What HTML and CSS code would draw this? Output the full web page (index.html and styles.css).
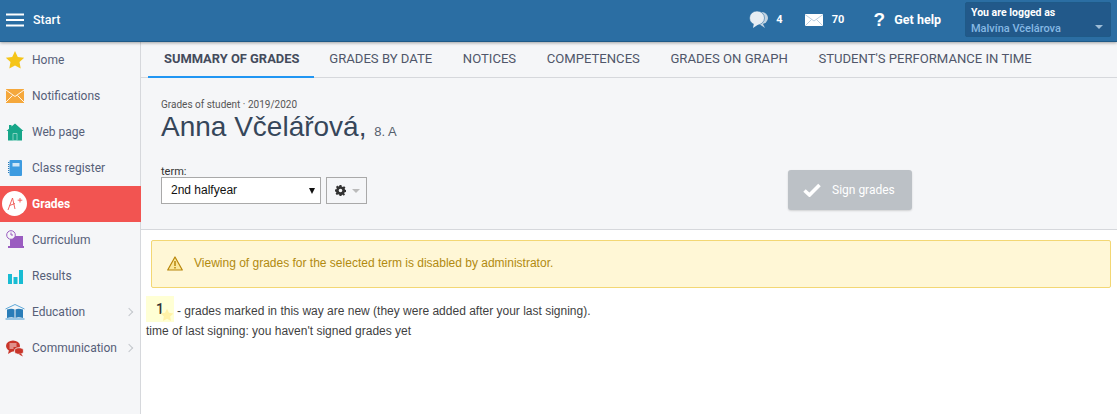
FILE: index.html
```html
<!DOCTYPE html>
<html lang="en">
<head>
<meta charset="utf-8">
<title>Summary of grades</title>
<link rel="stylesheet" href="styles.css">
</head>
<body>
<header class="topbar">
  <div class="brand">
    <svg class="burger" width="18" height="14" viewBox="0 0 18 14"><path d="M0 1.500h18M0 7h18M0 12.500h18" stroke="#fff" stroke-width="2"/></svg>
    <span class="brand-text">Start</span>
  </div>
  <div class="top-actions">
    <a class="top-item t-chat">
      <svg width="20" height="20" viewBox="0 0 20 20"><ellipse cx="12.500" cy="8" rx="6.500" ry="6" fill="#c3d4e2"/><path d="M13 12l3 6-6-4z" fill="#c3d4e2"/><ellipse cx="8" cy="8" rx="7.500" ry="7" fill="#e6edf3" stroke="#2b6ea3" stroke-width=".6"/><path d="M5 13l-1 5 6-4z" fill="#e6edf3"/></svg>
      <b>4</b>
    </a>
    <a class="top-item t-mail">
      <svg width="18" height="12" viewBox="0 0 18 12"><rect width="18" height="12" fill="#fff"/><path d="M0 .5l9 6.500 9-6.500M0 12l6.500-6.500M18 12l-6.500-6.500" fill="none" stroke="#a9c3d8" stroke-width=".8"/></svg>
      <b>70</b>
    </a>
    <a class="top-item t-help">
      <span class="qmark">?</span>
      <b class="help-text">Get help</b>
    </a>
    <div class="user-box">
      <div class="user-label">You are logged as</div>
      <div class="user-name">Malvína Včelárova</div>
      <span class="user-caret"></span>
    </div>
  </div>
</header>
<div class="shell">
  <nav class="sidebar">
    <a class="nav-item"><span class="nav-icon"><svg width="20" height="20" viewBox="0 0 20 20"><path d="M10 1l2.800 5.900 6.400.8-4.700 4.400 1.200 6.400-5.700-3.100-5.700 3.100 1.200-6.400L.8 7.700l6.400-.8z" fill="#f5c518"/></svg></span>Home</a>
    <a class="nav-item"><span class="nav-icon"><svg width="18" height="14" viewBox="0 0 18 14"><rect width="18" height="14" fill="#f5a83c"/><path d="M0 1l9 6.500 9-6.500M0 13l6.500-6.500M18 13l-6.500-6.500" fill="none" stroke="#fff" stroke-width=".9"/></svg></span>Notifications</a>
    <a class="nav-item"><span class="nav-icon"><svg width="18" height="18" viewBox="0 0 18 18"><path d="M9 .5l8.500 7.500H16v9.500H2V8H.5L3 5.800V2h2.500v1.600z" fill="#17a689"/><path d="M7 10.500h4v7H7z" fill="none" stroke="#9fdccf" stroke-width=".8"/></svg></span>Web page</a>
    <a class="nav-item"><span class="nav-icon"><svg width="14" height="16" viewBox="0 0 14 16"><rect x="1.500" width="12.500" height="16" rx="1" fill="#3d9be0"/><path d="M.5 2v12" stroke="#2a7ab8" stroke-width="1.400" stroke-dasharray="1 1"/><rect x="4.500" y="3" width="7" height="3.500" fill="#cfe6f7"/></svg></span>Class register</a>
    <a class="nav-item active"><span class="grade-badge"><svg width="20" height="18" viewBox="0 0 20 18"><path d="M3 15L7.500 3 10 14M4.500 10.500L10 8.500" fill="none" stroke="#ee5350" stroke-width=".9"/><path d="M15 3v4.500M12.700 5.200h4.600" stroke="#ee5350" stroke-width=".9"/></svg></span>Grades</a>
    <a class="nav-item"><span class="nav-icon"><svg width="20" height="20" viewBox="0 0 20 20"><rect x="5" y="6" width="13" height="10" fill="#9a5cc0"/><rect x="3" y="16" width="16" height="2" fill="#9a5cc0"/><circle cx="6" cy="5" r="4.300" fill="#f5f6f8" stroke="#9a5cc0" stroke-width="1"/><path d="M6 2.500V5h2" fill="none" stroke="#9a5cc0"/></svg></span>Curriculum</a>
    <a class="nav-item"><span class="nav-icon"><svg width="16" height="15" viewBox="0 0 16 15"><path d="M1 5h4v10H1zM6.500 8h4v7h-4zM12 1h4v14h-4z" fill="#18bcd3"/></svg></span>Results</a>
    <a class="nav-item"><span class="nav-icon"><svg width="20" height="17" viewBox="0 0 20 17"><path d="M.5 5L10 .5 19.500 5" fill="none" stroke="#5fa8d8" stroke-width="1"/><path d="M2 5.500c3-1 6-1 7.500 0V14C8 13 5 13 2 14zM18 5.500c-3-1-6-1-7.500 0V14c1.500-1 4.500-1 7.500 0z" fill="#2a7db8"/><path d="M.5 15h19" stroke="#5fa8d8" stroke-width="1.200"/></svg></span>Education<span class="chev"></span></a>
    <a class="nav-item"><span class="nav-icon"><svg width="18" height="17" viewBox="0 0 18 17"><ellipse cx="7" cy="6" rx="7" ry="5.500" fill="#c9352a"/><path d="M3 10l-1 4 5-3z" fill="#c9352a"/><ellipse cx="13" cy="11" rx="4.500" ry="3.300" fill="#c9352a" stroke="#f5f6f8" stroke-width=".8"/><path d="M15 13.500l2 3-4-2z" fill="#c9352a"/><path d="M3.500 4h7M3.500 6h7M3.500 8h4" stroke="#fff" stroke-width=".9"/></svg></span>Communication<span class="chev"></span></a>
  </nav>
  <main class="content">
    <div class="tabs">
      <a class="tab active">SUMMARY OF GRADES</a>
      <a class="tab">GRADES BY DATE</a>
      <a class="tab">NOTICES</a>
      <a class="tab">COMPETENCES</a>
      <a class="tab">GRADES ON GRAPH</a>
      <a class="tab">STUDENT'S PERFORMANCE IN TIME</a>
    </div>
    <section class="page-head">
      <div class="crumb">Grades of student · 2019/2020</div>
      <h1 class="student">Anna Včelářová, <small class="class-name">8. A</small></h1>
      <div class="controls">
        <div class="term">
          <label class="term-label">term:</label>
          <div class="term-row">
            <div class="select">2nd halfyear<span class="select-caret"></span></div>
            <div class="cog-btn">
              <svg width="11" height="11" viewBox="0 0 24 24"><path fill="#333" fill-rule="evenodd" d="M10 0h4l.7 3.300 2.300 1 2.900-1.800 2.800 2.800L21 8.100l1 2.300 2 .6v4l-3 .7-1 2.300 1.800 2.900-2.800 2.800L17 21l-2.300 1-.7 2h-4l-.7-3-2.300-1-2.900 1.800-2.800-2.800L3 17l-1-2.300-2-.7v-4l3-.7 1-2.300-1.800-2.900 2.800-2.800L7 3l2.300-1zM12 8a4 4 0 1 0 0 8 4 4 0 0 0 0-8z"/></svg>
              <span class="cog-caret"></span>
            </div>
          </div>
        </div>
        <button class="sign-btn" type="button">
          <svg width="18" height="14" viewBox="0 0 18 14"><path d="M1.500 7.500L6.500 12 16.500 2" fill="none" stroke="#fff" stroke-width="3.600"/></svg>
          <span>Sign grades</span>
        </button>
      </div>
    </section>
    <section class="body">
      <div class="alert">
        <svg width="16" height="15" viewBox="0 0 16 15"><path d="M8 1l7.300 13H.7z" fill="#fbe89a" stroke="#b8860b" stroke-width="1.200" stroke-linejoin="round"/><path d="M8 5v5M8 11v1.600" stroke="#b8860b" stroke-width="1.500"/></svg>
        <span>Viewing of grades for the selected term is disabled by administrator.</span>
      </div>
      <p class="legend"><span class="new-grade">1<svg class="mini-star" width="14" height="14" viewBox="0 0 20 20"><path d="M10 1l2.800 5.900 6.400.8-4.700 4.400 1.200 6.400-5.700-3.100-5.700 3.100 1.200-6.400L.8 7.700l6.400-.8z" fill="#fff2a8"/></svg></span><span class="legend-text">- grades marked in this way are new (they were added after your last signing).</span></p>
      <p class="last-sign">time of last signing: you haven't signed grades yet</p>
    </section>
  </main>
</div>
</body>
</html>
```
FILE: styles.css
```css
* { box-sizing: border-box; }
html, body { margin: 0; height: 100%; overflow: hidden; }
body { font-family: Roboto, "Liberation Sans", Arial, sans-serif; font-size: 12px; color: #333; background: #fff; display: flex; flex-direction: column; }

.topbar { height: 42px; flex: none; background: #2b6ea3; border-bottom: 1px solid #1f5a88; box-shadow: 0 1px 3px rgba(0,0,0,.35); display: flex; justify-content: space-between; align-items: center; position: relative; z-index: 2; color: #fff; }
.brand { display: flex; align-items: center; padding-left: 6px; margin-top: -2px; }
.brand-text { margin-left: 9px; font-size: 12.500px; font-weight: 500; }
.top-actions { display: flex; align-items: center; padding-right: 6px; }
.top-item { display: flex; align-items: center; font-size: 11px; margin-top: -2px; }
.top-item b { font-weight: 700; }
.t-chat { gap: 7px; margin-right: 22px; }
.t-mail { gap: 9px; margin-right: 28px; }
.t-help { margin-right: 24px; }
.qmark { font-family: "Liberation Sans", sans-serif; font-weight: 700; font-size: 19px; width: 14px; margin-right: 8px; text-align: center; }
.help-text { font-size: 12.500px; font-weight: 500; }
.user-box { width: 146px; height: 35px; margin-top: -3px; background: #22598a; border: 1px solid #1f5a88; border-radius: 2px; padding: 4px 5px; position: relative; }
.user-label { font-size: 10.500px; font-weight: 700; line-height: 12px; }
.user-name { font-size: 11px; font-weight: 500; color: #86b8e4; line-height: 15px; margin-top: 2px; }
.user-caret { position: absolute; right: 7px; bottom: 7px; border: 4px solid transparent; border-top: 4px solid #9dbcd6; border-bottom: 0; }

.shell { flex: 1; display: flex; min-height: 0; }
.sidebar { width: 141px; flex: none; background: #f5f6f8; border-right: 1px solid #d6d8dc; }
.nav-item { height: 36px; display: flex; align-items: center; padding-left: 32px; position: relative; color: #566078; font-size: 12px; }
.nav-icon { position: absolute; left: 5px; top: 8px; width: 20px; height: 20px; display: flex; align-items: center; justify-content: center; }
.nav-item.active { background: #f25451; color: #fff; font-weight: 700; margin-right: -1px; }
.grade-badge { position: absolute; left: 2px; top: 5px; width: 25px; height: 25px; border-radius: 50%; background: #fff; display: flex; align-items: center; justify-content: center; }
.chev { position: absolute; right: 8px; top: 15px; width: 6px; height: 6px; border-top: 1px solid #c4c7cc; border-right: 1px solid #c4c7cc; transform: rotate(45deg); }

.content { flex: 1; min-width: 0; display: flex; flex-direction: column; }
.tabs { height: 36px; flex: none; background: #f5f6f8; border-bottom: 1px solid #d6d8dc; display: flex; padding-left: 7px; }
.tab { height: 36px; padding: 9px 15.300px 0; font-size: 13.100px; color: #50566a; white-space: nowrap; }
.tab.active { width: 166px; color: #444b5c; font-size: 12.900px; font-weight: 700; padding-left: 16px; padding-right: 0; border-bottom: 2px solid #2196f3; }
.page-head { height: 152px; flex: none; background: #f5f6f8; border-bottom: 1px solid #d6d8dc; padding: 21px 20px 0; }
.crumb { font-size: 10px; line-height: 12px; color: #555; }
.student { margin: 0; font-family: "Liberation Sans", Arial, sans-serif; font-weight: 400; font-size: 28px; line-height: 32px; color: #36465a; }
.class-name { font-size: 13px; color: #555e6c; }
.controls { display: flex; margin-top: 18px; }
.term { width: 627px; }
.term-label { display: block; font-size: 11px; line-height: 11px; color: #333; }
.term-row { display: flex; gap: 5px; }
.select { width: 160px; height: 27px; background: #fff; border: 1px solid #a9a9a9; padding-left: 9px; font-family: "Liberation Sans", Arial, sans-serif; font-size: 12px; line-height: 25px; color: #111; position: relative; }
.select-caret { position: absolute; right: 5px; top: 10px; border: 3.500px solid transparent; border-top: 6px solid #111; border-bottom: 0; }
.cog-btn { width: 41px; height: 27px; border: 1px solid #a9a9a9; display: flex; align-items: center; padding-left: 8px; gap: 6px; background: #f5f6f8; }
.cog-caret { border: 4px solid transparent; border-top: 4px solid #bbb; border-bottom: 0; }
.sign-btn { width: 124px; height: 40px; margin-top: 4px; border: 0; border-radius: 3px; background: #bcc1c6; box-shadow: 0 1px 2px rgba(0,0,0,.15); color: #fff; font: 400 12px Roboto, sans-serif; display: flex; align-items: center; padding-left: 15px; gap: 11px; }

.body { flex: 1; padding: 10px 6px 0 10px; font-family: "Liberation Sans", Arial, sans-serif; }
.alert { height: 48px; background: #fff7d6; border: 1px solid #f3d774; border-radius: 2px; display: flex; align-items: center; padding: 0 0 2px 15px; gap: 11px; font-size: 12px; color: #b18a10; }
.legend { margin: 8px 0 0 -5px; font-size: 12px; line-height: 26px; color: #3f3f3f; display: flex; gap: 3px; }
.legend-text { padding-top: 2px; }
.new-grade { width: 28px; height: 26px; background: #ffffd5; text-align: center; font-family: Roboto, sans-serif; font-size: 14px; font-weight: 500; color: #333; position: relative; }
.mini-star { position: absolute; right: 0; bottom: 0; }
.last-sign { margin: 0 0 0 -5px; font-size: 12px; line-height: 14px; color: #3f3f3f; }
```
